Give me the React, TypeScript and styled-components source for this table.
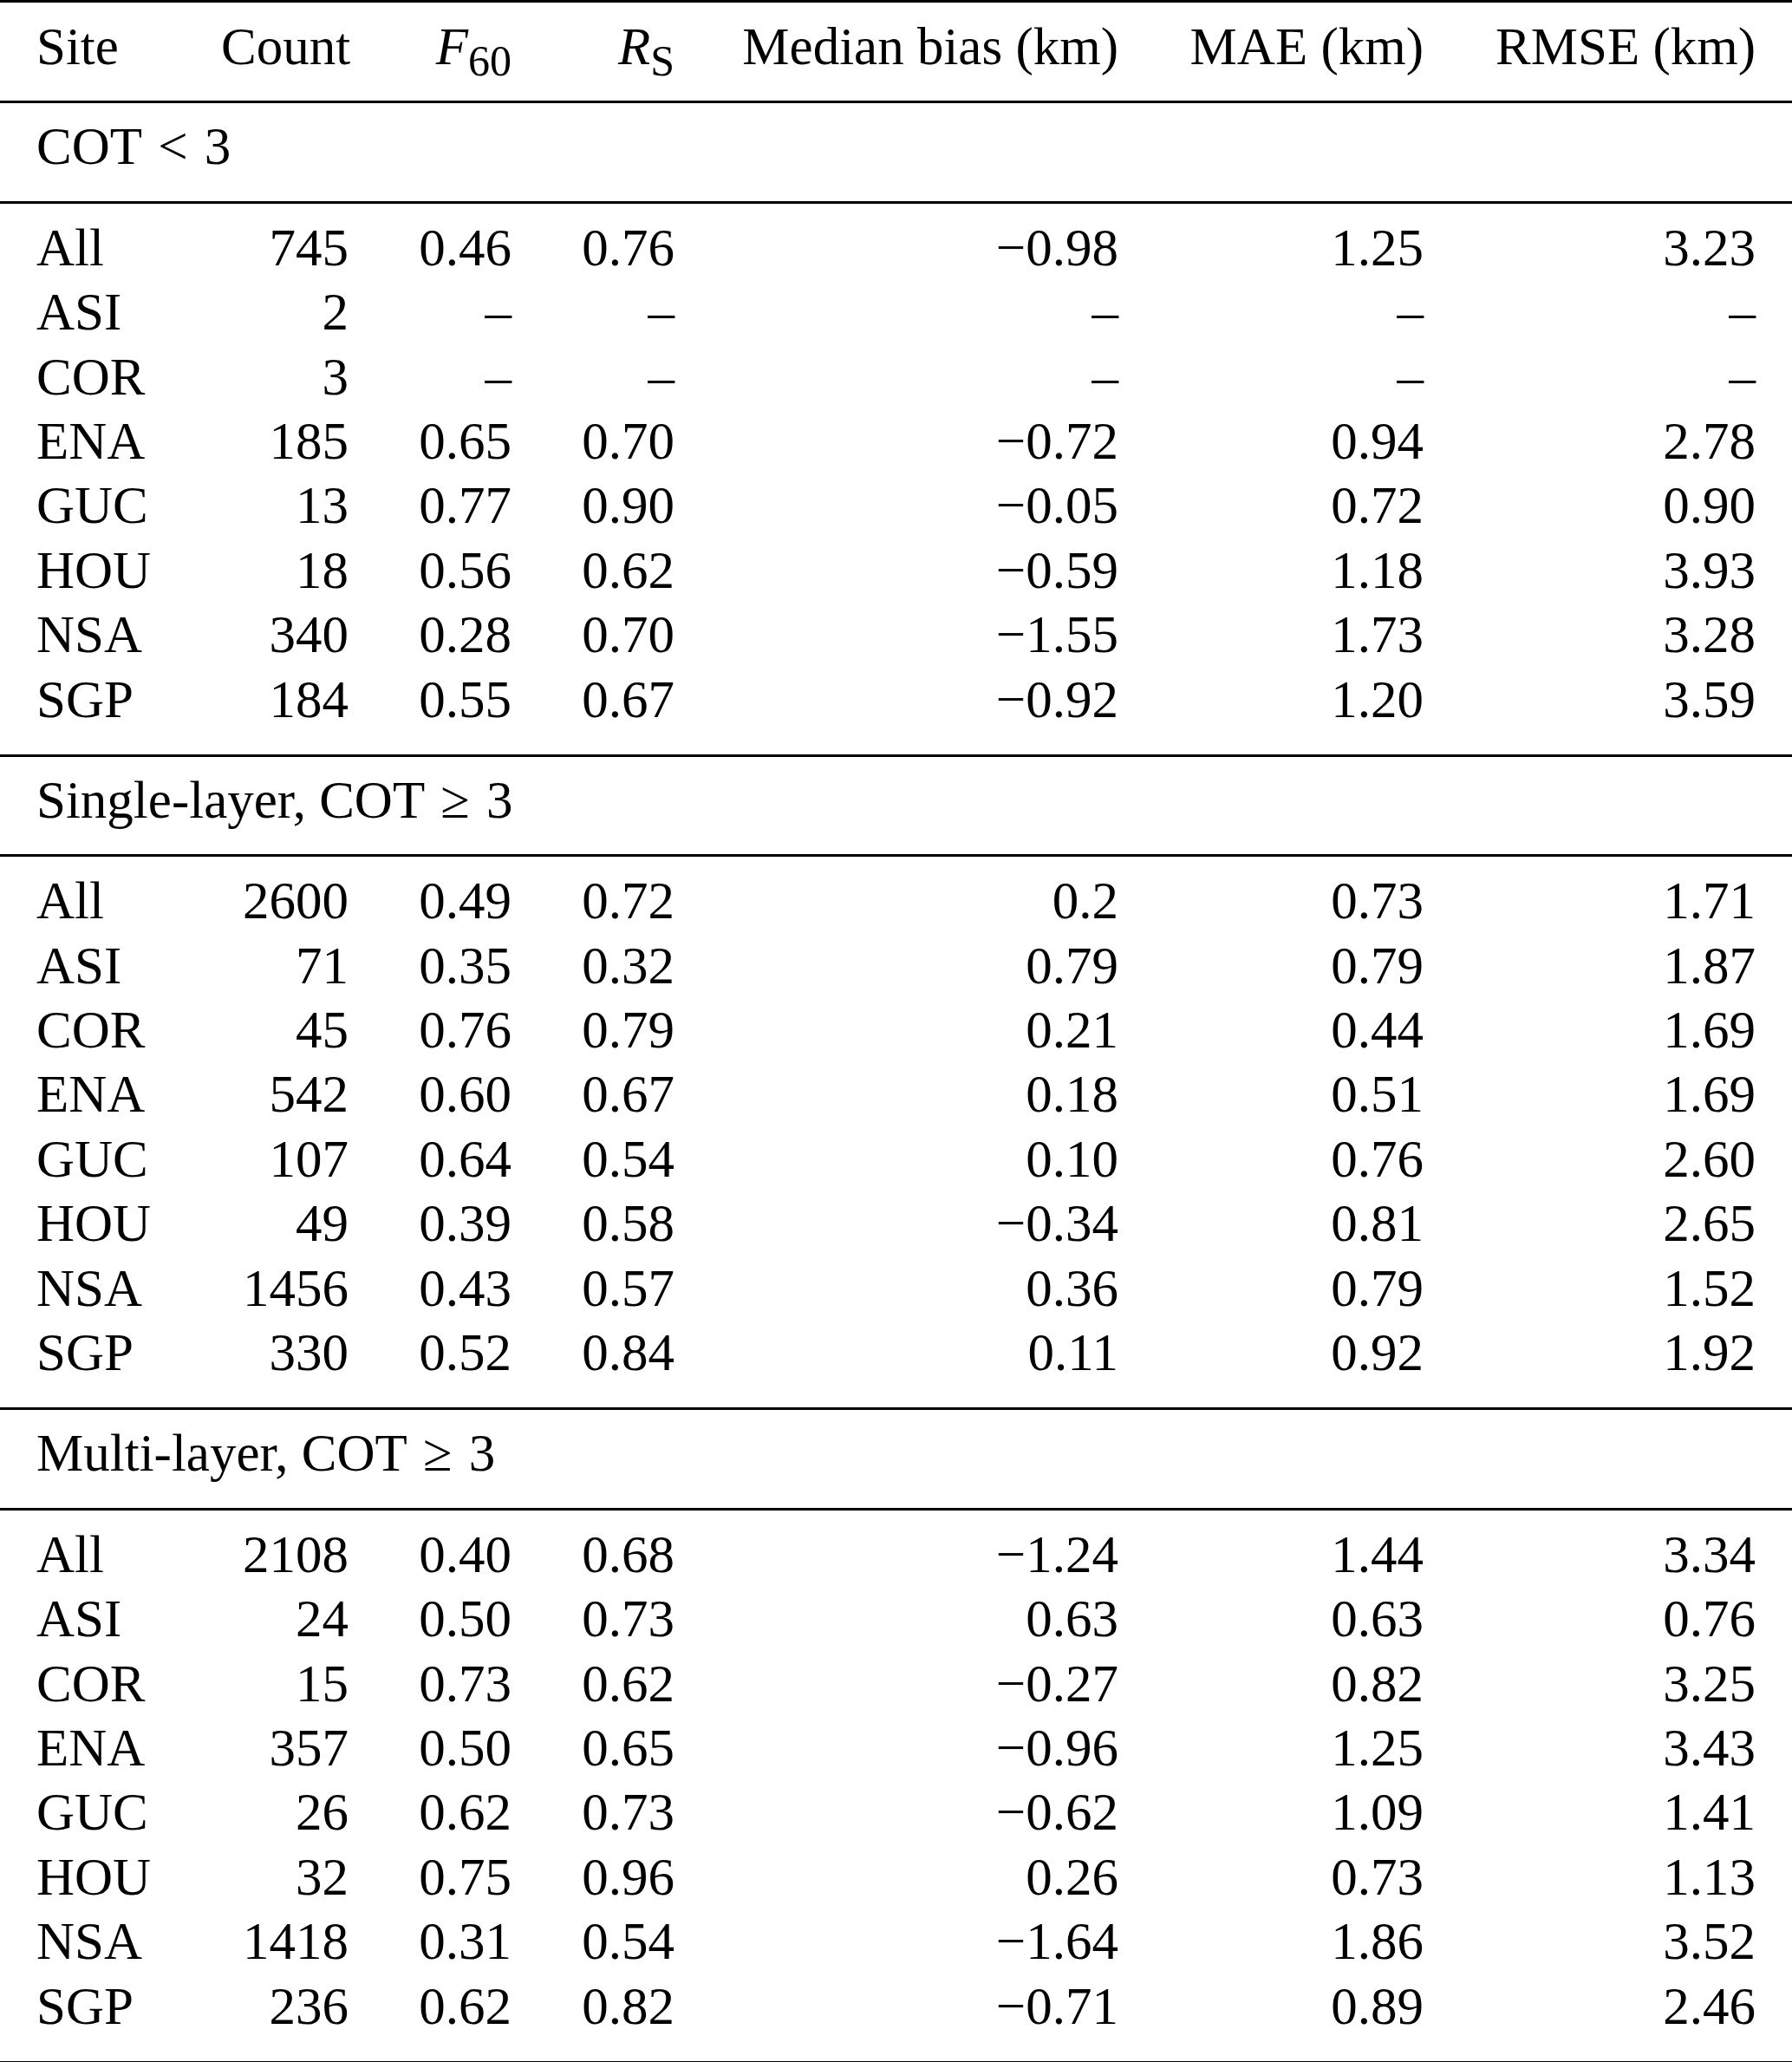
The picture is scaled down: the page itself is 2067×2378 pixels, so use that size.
import styled, { createGlobalStyle } from "styled-components";

const GlobalStyle = createGlobalStyle`
  html, body {
    margin: 0;
    padding: 0;
    background: #ffffff;
  }
  body {
    font-family: "Liberation Serif", "Times New Roman", serif;
    color: #000000;
  }
`;

const Table = styled.div`
  width: 2067px;
  font-family: "Liberation Serif", "Times New Roman", serif;
  font-size: 61px;
  color: #000;
`;

const Rule = styled.div`
  height: 3px;
  background: #000;
`;

const Block = styled.div<{ $top: number; $bottom: number }>`
  padding: ${(p) => p.$top}px 0 ${(p) => p.$bottom}px;
`;

const Row = styled.div`
  display: grid;
  grid-template-columns: 213px 147px 188px 188px 512px 352px 383px;
  padding: 0 42px;
  height: 74.4px;
  line-height: 74.4px;
  white-space: nowrap;
`;

const Cell = styled.div<{ $left?: boolean }>`
  text-align: ${(p) => (p.$left ? "left" : "right")};
`;

const Title = styled.div`
  padding: 0 42px;
  height: 74.4px;
  line-height: 74.4px;
  white-space: nowrap;
`;

const Rel = styled.span`
  margin: 0 4px;
`;

const Var = styled.i`
  font-style: italic;
`;

const Sub = styled.span`
  font-size: 50px;
  line-height: 0;
  vertical-align: -13px;
`;

type Sec = { label: string; rel: string; rows: string[][] };

const sections: Sec[] = [
  {
    label: "COT",
    rel: "<",
    rows: [
      ["All", "745", "0.46", "0.76", "−0.98", "1.25", "3.23"],
      ["ASI", "2", "–", "–", "–", "–", "–"],
      ["COR", "3", "–", "–", "–", "–", "–"],
      ["ENA", "185", "0.65", "0.70", "−0.72", "0.94", "2.78"],
      ["GUC", "13", "0.77", "0.90", "−0.05", "0.72", "0.90"],
      ["HOU", "18", "0.56", "0.62", "−0.59", "1.18", "3.93"],
      ["NSA", "340", "0.28", "0.70", "−1.55", "1.73", "3.28"],
      ["SGP", "184", "0.55", "0.67", "−0.92", "1.20", "3.59"],
    ],
  },
  {
    label: "Single-layer, COT",
    rel: "≥",
    rows: [
      ["All", "2600", "0.49", "0.72", "0.2", "0.73", "1.71"],
      ["ASI", "71", "0.35", "0.32", "0.79", "0.79", "1.87"],
      ["COR", "45", "0.76", "0.79", "0.21", "0.44", "1.69"],
      ["ENA", "542", "0.60", "0.67", "0.18", "0.51", "1.69"],
      ["GUC", "107", "0.64", "0.54", "0.10", "0.76", "2.60"],
      ["HOU", "49", "0.39", "0.58", "−0.34", "0.81", "2.65"],
      ["NSA", "1456", "0.43", "0.57", "0.36", "0.79", "1.52"],
      ["SGP", "330", "0.52", "0.84", "0.11", "0.92", "1.92"],
    ],
  },
  {
    label: "Multi-layer, COT",
    rel: "≥",
    rows: [
      ["All", "2108", "0.40", "0.68", "−1.24", "1.44", "3.34"],
      ["ASI", "24", "0.50", "0.73", "0.63", "0.63", "0.76"],
      ["COR", "15", "0.73", "0.62", "−0.27", "0.82", "3.25"],
      ["ENA", "357", "0.50", "0.65", "−0.96", "1.25", "3.43"],
      ["GUC", "26", "0.62", "0.73", "−0.62", "1.09", "1.41"],
      ["HOU", "32", "0.75", "0.96", "0.26", "0.73", "1.13"],
      ["NSA", "1418", "0.31", "0.54", "−1.64", "1.86", "3.52"],
      ["SGP", "236", "0.62", "0.82", "−0.71", "0.89", "2.46"],
    ],
  },
];

export default function App() {
  return (
    <>
      <GlobalStyle />
      <Table>
        <Rule />
        <Block $top={14} $bottom={25}>
          <Row>
            <Cell $left>Site</Cell>
            <Cell>Count</Cell>
            <Cell>
              <Var>F</Var>
              <Sub>60</Sub>
            </Cell>
            <Cell>
              <Var>R</Var>
              <Sub>S</Sub>
            </Cell>
            <Cell>Median bias (km)</Cell>
            <Cell>MAE (km)</Cell>
            <Cell>RMSE (km)</Cell>
          </Row>
        </Block>
        {sections.map((s) => (
          <div key={s.label}>
            <Rule />
            <Block $top={13} $bottom={25}>
              <Title>
                {s.label} <Rel>{s.rel}</Rel> 3
              </Title>
            </Block>
            <Rule />
            <Block $top={14} $bottom={26}>
              {s.rows.map((r) => (
                <Row key={r[0]}>
                  {r.map((v, i) => (
                    <Cell key={i} $left={i === 0}>
                      {v}
                    </Cell>
                  ))}
                </Row>
              ))}
            </Block>
          </div>
        ))}
        <Rule />
      </Table>
    </>
  );
}
